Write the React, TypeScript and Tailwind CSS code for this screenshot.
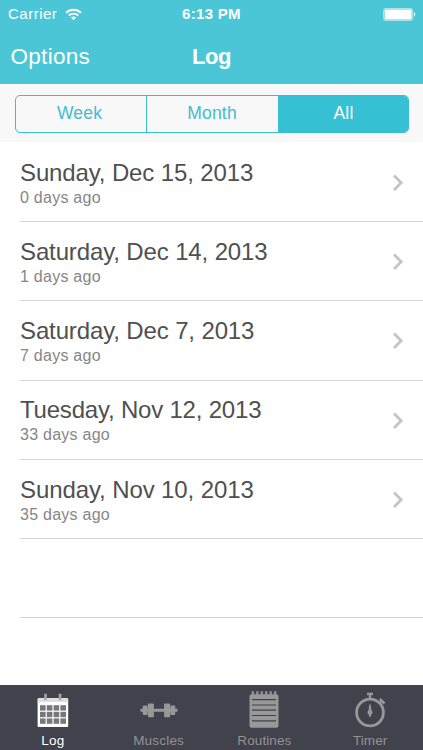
import React from "react";

const entries = [
  { title: "Sunday, Dec 15, 2013", sub: "0 days ago", fit: "tracking-[-0.13px]" },
  { title: "Saturday, Dec 14, 2013", sub: "1 days ago", fit: "tracking-[-0.13px]" },
  { title: "Saturday, Dec 7, 2013", sub: "7 days ago", fit: "tracking-[-0.13px]" },
  { title: "Tuesday, Nov 12, 2013", sub: "33 days ago", fit: "tracking-[-0.2px]" },
  { title: "Sunday, Nov 10, 2013", sub: "35 days ago", fit: "tracking-[-0.1px]" },
];

function Wifi() {
  return (
    <svg width="17" height="13" viewBox="0 0 17 13" fill="none" stroke="white" strokeWidth="1.9">
      <path d="M1 4.8C5.2.7 11.8.7 16 4.8" />
      <path d="M3.7 7.5c2.7-2.5 6.9-2.5 9.6 0" />
      <path d="M5.9 9.6c1.5-1.4 3.7-1.4 5.2 0L8.5 12.2z" fill="white" stroke="none" />
    </svg>
  );
}

function Battery() {
  return (
    <svg width="33" height="13" viewBox="0 0 33 13">
      <rect x=".6" y=".6" width="29" height="11.8" rx="1.8" fill="none" stroke="#b5e8f0" strokeWidth="1" />
      <rect x="1.6" y="1.6" width="27" height="9.8" rx=".6" fill="white" />
      <path d="M30.8 4.3c2 .6 2 3.8 0 4.4z" fill="#e1f6f9" />
    </svg>
  );
}

function CalendarIcon() {
  return (
    <svg width="32" height="36" viewBox="0 0 32 36">
      <path d="M.6 6.5a1.5 1.5 0 0 1 1.5-1.5h27.6a1.5 1.5 0 0 1 1.5 1.5v26.5a1 1 0 0 1-1 1H1.6a1 1 0 0 1-1-1z" fill="#fff" />
      <path d="M.6 6.5a1.5 1.5 0 0 1 1.5-1.5h27.6a1.5 1.5 0 0 1 1.5 1.5V9H.6z" fill="#dedee0" />
      <rect x="7.2" y=".7" width="2.6" height="6.6" rx=".6" fill="#a5a6aa" />
      <rect x="21.8" y=".7" width="2.6" height="6.6" rx=".6" fill="#a5a6aa" />
      {[12.2, 18.8, 25.4].map((y) =>
        [3, 9.8, 16.6, 23.4].map((x) => (
          <rect key={`${x}-${y}`} x={x} y={y} width="5.6" height="5.4" fill="#77777b" />
        ))
      )}
    </svg>
  );
}

function DumbbellIcon() {
  return (
    <svg width="38" height="36" viewBox="0 0 38 36" fill="#98989a">
      <rect x=".5" y="15.8" width="37" height="3" rx=".5" />
      <rect x="2.8" y="12.6" width="4.8" height="9.4" rx="1" />
      <rect x="7.9" y="10.6" width="6" height="13.6" rx="1" />
      <rect x="24.1" y="10.6" width="6" height="13.6" rx="1" />
      <rect x="30.4" y="12.6" width="4.8" height="9.4" rx="1" />
    </svg>
  );
}

function NotepadIcon() {
  return (
    <svg width="30" height="38" viewBox="0 0 30 38">
      <path d="M.5 5.3a2 2 0 0 1 2-2h25a2 2 0 0 1 2 2v29.4a2 2 0 0 1-2 2h-25a2 2 0 0 1-2-2z" fill="#98989a" />
      <path d="M3.8.3v3.5M8.3.3v3.5M12.8.3v3.5M17.2.3v3.5M21.7.3v3.5M26.2.3v3.5" stroke="#98989a" strokeWidth="2.2" />
      <path d="M3 8.7h24M3 14h24M3 19.2h24M3 24.5h24M3 29.8h24" stroke="#41424c" strokeWidth="1.2" />
    </svg>
  );
}

function StopwatchIcon() {
  return (
    <svg width="32" height="36" viewBox="0 0 32 36" fill="none" stroke="#98989a">
      <circle cx="16" cy="20.5" r="13.4" strokeWidth="2.8" />
      <path d="M13 1.9h6" strokeWidth="2.4" />
      <path d="M16 1.5v6" strokeWidth="2.4" />
      <path d="M24.9 11.6l3-3" strokeWidth="2.4" />
      <path d="M25.9 6.9l4.6 4.6" strokeWidth="2.6" />
      <path d="M15.2 12.5h1.6l.5 5.4a2.9 2.9 0 0 1 .4 4.4l-.5.3-.3 2.2h-1.8l-.3-2.2-.5-.3a2.9 2.9 0 0 1 .4-4.4z" fill="#98989a" stroke="none" />
    </svg>
  );
}

const tabs = [
  { label: "Log", icon: <CalendarIcon />, color: "text-white", pad: "pt-[8px]", fit: "tracking-[0.3px]" },
  { label: "Muscles", icon: <DumbbellIcon />, color: "text-[#929294]", pad: "pt-[8px]", fit: "tracking-[0.2px]" },
  { label: "Routines", icon: <NotepadIcon />, color: "text-[#929294]", pad: "pt-[6px]", fit: "tracking-[0.1px]" },
  { label: "Timer", icon: <StopwatchIcon />, color: "text-[#929294]", pad: "pt-[7px]", fit: "tracking-[0.1px]" },
];

export default function App() {
  return (
    <div className="flex h-[750px] w-[423px] flex-col overflow-hidden bg-white font-['Liberation_Sans',Arial,sans-serif]">
      <header className="h-[84px] shrink-0 bg-[#4bc6d7] text-white">
        <div className="grid h-7 grid-cols-3 items-center">
          <div className="flex items-center gap-[8px] pl-2">
            <span className="text-[15px] leading-7 tracking-[0.5px]">Carrier</span>
            <Wifi />
          </div>
          <span className="text-center text-[15px] font-bold leading-7 tracking-[0.3px]">6:13 PM</span>
          <div className="flex justify-end pr-[7px]"><Battery /></div>
        </div>
        <div className="grid h-14 grid-cols-3 px-[10.5px]">
          <span className="text-[22.5px] leading-[57px] tracking-[0.3px]">Options</span>
          <span className="text-center text-[22px] font-bold leading-[57px] tracking-[-0.4px]">Log</span>
        </div>
      </header>

      <div className="flex h-[58px] shrink-0 items-start bg-[#f8f8f8] px-[14.5px] pt-[10.5px]">
        <div className="grid h-[38px] w-full grid-cols-[131px_131px_1fr] overflow-hidden rounded-[5px] border border-[#3bbfd2] text-center text-[17.5px] leading-[35px] tracking-[0.2px] text-[#45bdce]">
          <span className="border-r border-[#3bbfd2] pr-[2px]">Week</span>
          <span>Month</span>
          <span className="bg-[#35c0d4] pl-[2px] text-white">All</span>
        </div>
      </div>

      <main className="min-h-0 grow pl-5 pt-[0.75px]">
        {entries.map((e) => (
          <div key={e.title} className="flex h-[79.25px] items-start justify-between border-b border-[#d3d4d5] pr-[19px]">
            <div className="whitespace-nowrap pt-[15.9px]">
              <div className={`h-[29px] text-[24px] leading-[28px] text-[#505050] ${e.fit}`}>{e.title}</div>
              <div className="text-[16px] leading-5 tracking-[0.25px] text-[#868686]">{e.sub}</div>
            </div>
            <svg className="mt-[31px]" width="12" height="18" viewBox="0 0 12 18" fill="none" stroke="#c4c4c8" strokeWidth="2.8">
              <path d="M2 1.5l7.2 7.3L2 16.1" />
            </svg>
          </div>
        ))}
        <div className="h-[79.25px] border-b border-[#d3d4d5]" />
      </main>

      <nav className="grid h-[65px] shrink-0 grid-cols-4 bg-[#41424c]">
        {tabs.map((t) => (
          <div key={t.label} className="flex flex-col items-center">
            <div className={`flex h-[47px] shrink-0 justify-center ${t.pad}`}>{t.icon}</div>
            <span className={`text-[13.5px] leading-[18px] ${t.color} ${t.fit}`}>{t.label}</span>
          </div>
        ))}
      </nav>
    </div>
  );
}
